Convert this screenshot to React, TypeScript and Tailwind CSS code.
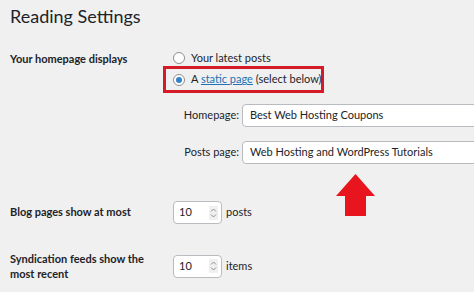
import React from 'react';

const Radio = ({ checked }: { checked?: boolean }) => (
  <span className="w-[12px] h-[12px] rounded-full border border-[#8c8f94] bg-white flex items-center justify-center shrink-0">
    {checked && <span className="w-[6px] h-[6px] rounded-full bg-[#3582c4]" />}
  </span>
);

const NumberBox = ({ value }: { value: string }) => (
  <div className="w-[49px] h-[23px] rounded-[4px] border border-[#b8bbbf] bg-white flex items-center justify-between pl-[5px] pr-[3px]">
    <span>{value}</span>
    <svg width="9" height="14" viewBox="0 0 9 14" className="bg-[#f0f0f1]">
      <path d="M2 5.5 L4.5 3 L7 5.5" fill="none" stroke="#8c8f94" strokeWidth="1" />
      <path d="M2 8.5 L4.5 11 L7 8.5" fill="none" stroke="#8c8f94" strokeWidth="1" />
    </svg>
  </div>
);

export default function App() {
  return (
    <div
      className="relative w-[474px] h-[292px] overflow-hidden bg-[#f0f0f1] text-[#1d2327] text-[11px] whitespace-nowrap"
      style={{ fontFamily: 'Lato, sans-serif' }}
    >
      <h1 className="pl-[10px] pt-[2px] text-[18px] leading-[28px] font-normal">Reading Settings</h1>

      {/* homepage displays */}
      <div className="flex mt-[20px]">
        <div className="w-[163px] shrink-0 pl-[10px] font-bold leading-[15px] pt-[1px]">Your homepage displays</div>
        <div className="flex flex-col">
          <div className="flex items-center gap-[6px] pl-[10px] h-[16px]">
            <Radio />
            <span>Your latest posts</span>
          </div>
          <div className="flex items-center gap-[6px] pl-[7px] w-[161px] h-[27px] border-[3px] border-[#d51b28]">
            <Radio checked />
            <span>
              A <span className="text-[#2271b1] underline">static page</span> (select below)
            </span>
          </div>
          <div className="flex items-center mt-[11px]">
            <span className="w-[79px] shrink-0 text-right pr-[3px]">Homepage:</span>
            <div className="w-[250px] h-[23px] border border-[#b8bbbf] rounded-[4px] bg-white flex items-center pl-[7px]">
              Best Web Hosting Coupons
            </div>
          </div>
          <div className="flex items-center mt-[14px]">
            <span className="w-[79px] shrink-0 text-right pr-[3px]">Posts page:</span>
            <div className="w-[250px] h-[23px] border border-[#b8bbbf] rounded-[4px] bg-white flex items-center pl-[7px]">
              Web Hosting and WordPress Tutorials
            </div>
          </div>
        </div>
      </div>

      {/* blog pages */}
      <div className="flex items-center mt-[37px]">
        <div className="w-[173px] shrink-0 pl-[10px] font-bold">Blog pages show at most</div>
        <NumberBox value="10" />
        <span className="ml-[4px]">posts</span>
      </div>

      {/* syndication */}
      <div className="flex items-center mt-[27px]">
        <div className="w-[173px] shrink-0 pl-[10px] font-bold leading-[15px]">
          Syndication feeds show the
          <br />
          most recent
        </div>
        <NumberBox value="10" />
        <span className="ml-[4px]">items</span>
      </div>

      {/* red arrow annotation */}
      <svg className="absolute left-[336px] top-[173px]" width="40" height="45" viewBox="0 0 40 45">
        <path d="M19.5 1 L39 23 L30 23 L30 43 L9 43 L9 23 L0 23 Z" fill="#e8141e" />
      </svg>
    </div>
  );
}
